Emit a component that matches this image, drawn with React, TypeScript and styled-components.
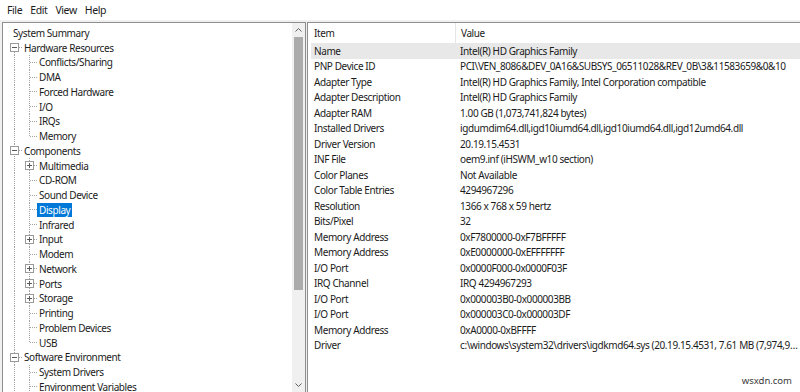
import styled, { createGlobalStyle } from "styled-components";

const GlobalStyle = createGlobalStyle`
    html, body {
        margin: 0;
        padding: 0;
        background: #f0f0f0;
    }
    body {
        font-family: "Noto Sans", "Open Sans", sans-serif;
        font-size: 10px;
        letter-spacing: -0.4px;
        color: #1b1b1b;
    }
`;

const DOT = "#a3a3a3";

type Row = {
    label: string;
    level: number;
    expander?: "open" | "closed";
    last?: boolean;
    selected?: boolean;
};

const tree: Row[] = [
    { label: "System Summary", level: 0 },
    { label: "Hardware Resources", level: 1, expander: "open" },
    { label: "Conflicts/Sharing", level: 2 },
    { label: "DMA", level: 2 },
    { label: "Forced Hardware", level: 2 },
    { label: "I/O", level: 2 },
    { label: "IRQs", level: 2 },
    { label: "Memory", level: 2, last: true },
    { label: "Components", level: 1, expander: "open" },
    { label: "Multimedia", level: 2, expander: "closed" },
    { label: "CD-ROM", level: 2 },
    { label: "Sound Device", level: 2 },
    { label: "Display", level: 2, selected: true },
    { label: "Infrared", level: 2 },
    { label: "Input", level: 2, expander: "closed" },
    { label: "Modem", level: 2 },
    { label: "Network", level: 2, expander: "closed" },
    { label: "Ports", level: 2, expander: "closed" },
    { label: "Storage", level: 2, expander: "closed" },
    { label: "Printing", level: 2 },
    { label: "Problem Devices", level: 2 },
    { label: "USB", level: 2, last: true },
    { label: "Software Environment", level: 1, expander: "open" },
    { label: "System Drivers", level: 2 },
    { label: "Environment Variables", level: 2 },
];

const details: [string, string][] = [
    ["Name", "Intel(R) HD Graphics Family"],
    ["PNP Device ID", "PCI\\VEN_8086&DEV_0A16&SUBSYS_06511028&REV_0B\\3&11583659&0&10"],
    ["Adapter Type", "Intel(R) HD Graphics Family, Intel Corporation compatible"],
    ["Adapter Description", "Intel(R) HD Graphics Family"],
    ["Adapter RAM", "1.00 GB (1,073,741,824 bytes)"],
    ["Installed Drivers", "igdumdim64.dll,igd10iumd64.dll,igd10iumd64.dll,igd12umd64.dll"],
    ["Driver Version", "20.19.15.4531"],
    ["INF File", "oem9.inf (iHSWM_w10 section)"],
    ["Color Planes", "Not Available"],
    ["Color Table Entries", "4294967296"],
    ["Resolution", "1366 x 768 x 59 hertz"],
    ["Bits/Pixel", "32"],
    ["Memory Address", "0xF7800000-0xF7BFFFFF"],
    ["Memory Address", "0xE0000000-0xEFFFFFFF"],
    ["I/O Port", "0x0000F000-0x0000F03F"],
    ["IRQ Channel", "IRQ 4294967293"],
    ["I/O Port", "0x000003B0-0x000003BB"],
    ["I/O Port", "0x000003C0-0x000003DF"],
    ["Memory Address", "0xA0000-0xBFFFF"],
    ["Driver", "c:\\windows\\system32\\drivers\\igdkmd64.sys (20.19.15.4531, 7.61 MB (7,974,904 bytes), 5/31/2016 5:44 PM)"],
];

const Window = styled.div`
    width: 800px;
    height: 392px;
    display: flex;
    flex-direction: column;
    overflow: hidden;
    position: relative;
`;

const MenuBar = styled.div`
    height: 20px;
    background: #ffffff;
    display: flex;
    align-items: center;
    padding-left: 7px;
    gap: 8px;
    font-size: 10.5px;
`;

const MenuItem = styled.span`
    color: #1b1b1b;
`;

const Body = styled.div`
    flex: 1;
    display: flex;
    padding: 2px 0 0 2px;
    gap: 1px;
    min-height: 0;
`;

const TreePane = styled.div`
    width: 302px;
    display: flex;
    background: #ffffff;
    border: 1px solid #8e8e8e;
    border-bottom: none;
`;

const TreeList = styled.div`
    flex: 1;
    padding: 2.5px 0 0 4px;
    overflow: hidden;
`;

const TreeRow = styled.div`
    height: 14.75px;
    display: flex;
    align-items: center;
    white-space: nowrap;
`;

const Connector = styled.span<{ $vline: "full" | "top" | "bottom" | "none"; $hline?: boolean }>`
    width: 15px;
    height: 100%;
    flex: none;
    display: flex;
    align-items: center;
    justify-content: center;
    background-image: ${(p) =>
        [
            p.$vline !== "none"
                ? `repeating-linear-gradient(to bottom, ${DOT} 0 1px, transparent 1px 2px)`
                : null,
            p.$hline
                ? `repeating-linear-gradient(to right, ${DOT} 0 1px, transparent 1px 2px)`
                : null,
        ]
            .filter(Boolean)
            .join(", ") || "none"};
    background-repeat: no-repeat;
    background-size: ${(p) =>
        [
            p.$vline !== "none" ? `1px ${p.$vline === "full" ? "100%" : "50%"}` : null,
            p.$hline ? "7px 1px" : null,
        ]
            .filter(Boolean)
            .join(", ") || "auto"};
    background-position: ${(p) =>
        [
            p.$vline !== "none" ? `7px ${p.$vline === "bottom" ? "100%" : "0"}` : null,
            p.$hline ? "8px 50%" : null,
        ]
            .filter(Boolean)
            .join(", ") || "0 0"};
`;

const Expander = styled.span<{ $open: boolean }>`
    width: 7px;
    height: 7px;
    border: 1px solid #9a9a9a;
    background: #ffffff;
    position: relative;
    margin-left: -1px;

    &::before,
    &::after {
        content: "";
        position: absolute;
        background: #5a5a5a;
    }
    &::before {
        left: 1px;
        top: 3px;
        width: 5px;
        height: 1px;
    }
    &::after {
        display: ${(p) => (p.$open ? "none" : "block")};
        left: 3px;
        top: 1px;
        width: 1px;
        height: 5px;
    }
`;

const Label = styled.span<{ $selected?: boolean; $root?: boolean }>`
    margin-left: ${(p) => (p.$root ? "4px" : "0")};
    padding: 0 2px;
    line-height: 14px;
    background: ${(p) => (p.$selected ? "#0078d7" : "transparent")};
    color: ${(p) => (p.$selected ? "#ffffff" : "#1b1b1b")};
`;

const ScrollBar = styled.div`
    width: 13px;
    flex: none;
    background: #f0f0f0;
    display: flex;
    flex-direction: column;
    align-items: center;
`;

const ScrollButton = styled.div`
    height: 14px;
    width: 100%;
    display: flex;
    align-items: center;
    justify-content: center;
    color: #606060;
`;

const Thumb = styled.div`
    width: 9px;
    height: 253px;
    background: #ababab;
`;

const Track = styled.div`
    flex: 1;
`;

const DetailPane = styled.div`
    flex: 1;
    min-width: 0;
    background: #ffffff;
    border-left: 1px solid #8e8e8e;
    border-top: 1px solid #8e8e8e;
    padding-left: 3px;
    overflow: hidden;
`;

const Header = styled.div`
    height: 20px;
    display: grid;
    grid-template-columns: 147px 1fr;
    align-items: center;
`;

const HeaderCell = styled.div<{ $divider?: boolean }>`
    height: 100%;
    display: flex;
    align-items: center;
    padding-left: 3px;
    border-right: ${(p) => (p.$divider ? "1px solid #e5e5e5" : "none")};
    margin-right: ${(p) => (p.$divider ? "2px" : "0")};
`;

const DataRow = styled.div<{ $selected?: boolean }>`
    height: 15.5px;
    display: grid;
    grid-template-columns: 146px minmax(0, 1fr);
    align-items: center;
    background: ${(p) => (p.$selected ? "#e8e8e8" : "transparent")};
    white-space: nowrap;
`;

const Cell = styled.span`
    padding-left: 3px;
    overflow: hidden;
    text-overflow: ellipsis;
`;

const Watermark = styled.span`
    position: absolute;
    right: 8px;
    bottom: 5px;
    font-size: 9.5px;
    letter-spacing: 0;
    color: #3a3a3a;
`;

const Chevron = ({ up }: { up?: boolean }) => (
    <svg width="7" height="4" viewBox="0 0 7 4">
        <path
            d={up ? "M0.5 3.5 L3.5 0.5 L6.5 3.5" : "M0.5 0.5 L3.5 3.5 L6.5 0.5"}
            fill="none"
            stroke="currentColor"
            strokeWidth="1"
        />
    </svg>
);

const TreeItem = ({ row }: { row: Row }) => {
    if (row.level === 0) {
        return (
            <TreeRow>
                <Label $root>{row.label}</Label>
            </TreeRow>
        );
    }
    if (row.level === 1) {
        const first = row.label === "Hardware Resources";
        return (
            <TreeRow>
                <Connector $vline={first ? "bottom" : "full"} $hline>
                    {row.expander && <Expander $open={row.expander === "open"} />}
                </Connector>
                <Label>{row.label}</Label>
            </TreeRow>
        );
    }
    return (
        <TreeRow>
            <Connector $vline="full" />
            <Connector $vline={row.last ? "top" : "full"} $hline>
                {row.expander && <Expander $open={row.expander === "open"} />}
            </Connector>
            <Label $selected={row.selected}>{row.label}</Label>
        </TreeRow>
    );
};

const App = () => {
    return (
        <Window>
            <GlobalStyle />
            <MenuBar>
                <MenuItem>File</MenuItem>
                <MenuItem>Edit</MenuItem>
                <MenuItem>View</MenuItem>
                <MenuItem>Help</MenuItem>
            </MenuBar>
            <Body>
                <TreePane>
                    <TreeList>
                        {tree.map((row, idx) => (
                            <TreeItem key={idx} row={row} />
                        ))}
                    </TreeList>
                    <ScrollBar>
                        <ScrollButton>
                            <Chevron up />
                        </ScrollButton>
                        <Thumb />
                        <Track />
                        <ScrollButton>
                            <Chevron />
                        </ScrollButton>
                    </ScrollBar>
                </TreePane>
                <DetailPane>
                    <Header>
                        <HeaderCell $divider>Item</HeaderCell>
                        <HeaderCell>Value</HeaderCell>
                    </Header>
                    {details.map(([item, value], idx) => (
                        <DataRow key={idx} $selected={idx === 0}>
                            <Cell>{item}</Cell>
                            <Cell>{value}</Cell>
                        </DataRow>
                    ))}
                </DetailPane>
            </Body>
            <Watermark>wsxdn.com</Watermark>
        </Window>
    );
};

export default App;
